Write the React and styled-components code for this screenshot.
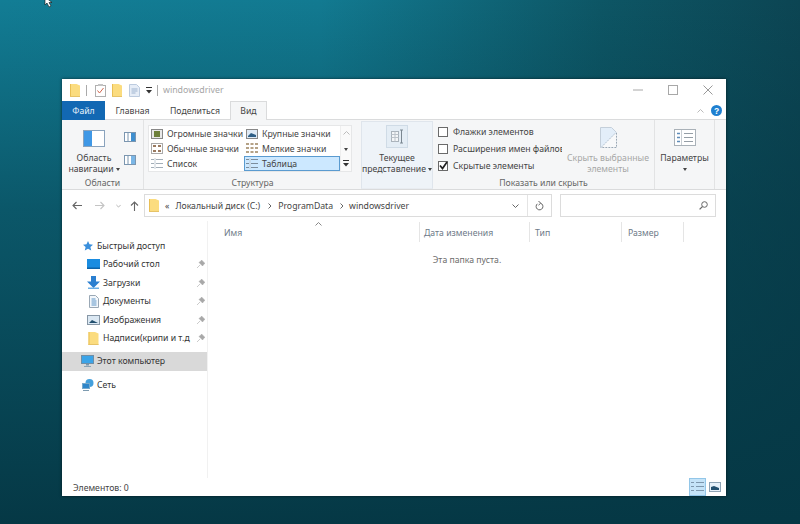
import React from "react";
import styled, { createGlobalStyle } from "styled-components";

const GlobalStyle = createGlobalStyle`
  html, body { margin: 0; padding: 0; }
  body { font-family: "Noto Sans", "Open Sans", sans-serif; font-size: 8.7px; color: #444; }
  * { box-sizing: border-box; }
  svg { flex: none; }
`;

const Desktop = styled.div`
  position: relative;
  width: 800px;
  height: 524px;
  overflow: hidden;
  padding: 79px 74px 28px 62px;
  background:
    linear-gradient(180deg, rgba(5, 56, 69, 0) 0%, rgba(5, 56, 69, 0.55) 40%, #053845 100%),
    linear-gradient(90deg, #127d95 0%, #127a91 40%, #0d5665 75%, #0c4553 100%);
`;

const Cursor = styled.svg`
  position: absolute;
  left: 44px;
  top: -3px;
`;

const Window = styled.div`
  width: 664px;
  height: 417px;
  display: flex;
  flex-direction: column;
  background: #fff;
  box-shadow: 0 0 3px rgba(0, 0, 0, 0.6);
`;

const TitleBar = styled.div`
  height: 22px;
  flex: none;
  display: flex;
  align-items: center;
  padding-left: 8px;
`;

const QuickIcon = styled.span`
  display: flex;
  margin-left: ${(p) => p.$gap || 0}px;
`;

const TitleDivider = styled.span`
  width: 1px;
  height: 11px;
  margin-left: ${(p) => p.$gap}px;
  background: #aaa;
`;

const TitleText = styled.span`
  margin-left: 5px;
  color: #a5a5a5;
  font-size: 8.8px;
`;

const WindowControls = styled.div`
  margin-left: auto;
  padding-right: 13px;
  display: flex;
  align-items: center;
  gap: 25px;
`;

const TabBar = styled.div`
  height: 19px;
  flex: none;
  display: flex;
  align-items: stretch;
  position: relative;
`;

const FileTab = styled.div`
  width: 43px;
  display: flex;
  align-items: center;
  justify-content: center;
  background: #1268b3;
  color: #e6f1fa;
`;

const Tab = styled.div`
  width: ${(p) => p.$w}px;
  display: flex;
  align-items: center;
  justify-content: center;
  color: #444;
  z-index: 1;
  ${(p) =>
    p.$active &&
    `
    background: #f5f6f7;
    border: 1px solid #dadbdc;
    border-bottom: none;
  `}
`;

const TabTools = styled.div`
  margin-left: auto;
  padding-right: 4px;
  display: flex;
  align-items: center;
  gap: 7px;
`;

const Ribbon = styled.div`
  height: 71px;
  flex: none;
  display: flex;
  background: #f5f6f7;
  border-top: 1px solid #dadbdc;
  border-bottom: 1px solid #dadbdc;
  margin-top: -1px;
`;

const Group = styled.div`
  width: ${(p) => p.$w}px;
  flex: none;
  display: flex;
  flex-direction: column;
  border-right: ${(p) => (p.$plain ? "none" : "1px solid #e2e3e4")};
`;

const GroupBody = styled.div`
  flex: 1;
  display: flex;
  min-height: 0;
`;

const GroupLabel = styled.div`
  height: 12px;
  flex: none;
  text-align: center;
  line-height: 12px;
  color: #666;
  white-space: nowrap;
`;

const BigButton = styled.div`
  width: ${(p) => p.$w}px;
  margin-left: ${(p) => p.$ml || 0}px;
  display: flex;
  flex-direction: column;
  align-items: center;
  text-align: center;
  line-height: 10.5px;
  white-space: nowrap;
  padding-top: ${(p) => p.$pt || 9}px;
  color: ${(p) => (p.$disabled ? "#a6a6a6" : "#444")};
`;

const BigIcon = styled.div`
  height: ${(p) => p.$h || 22}px;
  flex: none;
  display: flex;
  align-items: flex-start;
  justify-content: center;
`;

const Caret = styled.span`
  display: inline-block;
  width: 0;
  height: 0;
  margin-left: 2px;
  vertical-align: 1px;
  border-left: 2px solid transparent;
  border-right: 2px solid transparent;
  border-top: 3px solid #444;
`;

const LoneCaret = styled(Caret)`
  margin: 4px 0 0;
`;

const SmallPaneIcons = styled.div`
  margin-left: 5px;
  padding-top: 12px;
  display: flex;
  flex-direction: column;
  gap: 13px;
`;

const Gallery = styled.div`
  margin: 5px 0 0 4px;
  width: 204px;
  height: 47px;
  display: flex;
  background: #fff;
  border: 1px solid #e6e7e8;
`;

const GalleryGrid = styled.div`
  width: 191px;
  display: grid;
  grid-template-columns: 95px 96px;
  grid-auto-rows: 15px;
`;

const GalleryItem = styled.div`
  display: flex;
  align-items: center;
  gap: 4px;
  padding-left: ${(p) => (p.$selected ? 1 : 2)}px;
  white-space: nowrap;
  ${(p) =>
    p.$selected &&
    `
    background: #cce8ff;
    border: 1px solid #5a9bd0;
  `}
`;

const GalleryScroll = styled.div`
  flex: 1;
  display: flex;
  flex-direction: column;
  align-items: center;
  justify-content: space-around;
  background: #fafafa;
  border-left: 1px solid #eee;
`;

const CurrentView = styled.div`
  width: 72px;
  margin-top: 1px;
  display: flex;
  flex-direction: column;
  align-items: center;
  text-align: center;
  line-height: 10.5px;
  white-space: nowrap;
  padding-top: 3px;
  background: #eef3f8;
  border: 1px solid #dfe5ec;
  border-bottom-color: #e8ecf1;
`;

const CheckList = styled.div`
  width: 124px;
  margin-left: 5px;
  padding-top: 5px;
  display: flex;
  flex-direction: column;
  gap: 4px;
  overflow: hidden;
`;

const CheckRow = styled.div`
  height: 13px;
  display: flex;
  align-items: center;
  gap: 5px;
  white-space: nowrap;
`;

const CheckBox = styled.span`
  width: 10px;
  height: 10px;
  flex: none;
  display: flex;
  align-items: center;
  justify-content: center;
  background: #fff;
  border: 1px solid #6a6a6a;
`;

const AddressRow = styled.div`
  height: 31px;
  flex: none;
  display: flex;
  align-items: center;
  padding-left: 10px;
`;

const NavButtons = styled.div`
  width: 72px;
  flex: none;
  display: flex;
  align-items: center;
`;

const NavButton = styled.span`
  display: flex;
  margin-left: ${(p) => p.$ml || 0}px;
`;

const AddressBox = styled.div`
  width: 408px;
  height: 23px;
  flex: none;
  display: flex;
  align-items: center;
  padding-left: 4px;
  border: 1px solid #dcdcdc;
  color: #444;
`;

const Crumb = styled.span`
  margin-left: ${(p) => p.$ml}px;
  white-space: nowrap;
`;

const AddressEnd = styled.div`
  margin-left: auto;
  display: flex;
  align-items: center;
  height: 100%;
`;

const AddressCell = styled.span`
  width: ${(p) => p.$w}px;
  height: 100%;
  display: flex;
  align-items: center;
  justify-content: center;
  border-left: ${(p) => (p.$line ? "1px solid #e4e4e4" : "none")};
`;

const SearchBox = styled.div`
  width: 156px;
  height: 23px;
  margin-left: 8px;
  display: flex;
  align-items: center;
  justify-content: flex-end;
  padding-right: 7px;
  border: 1px solid #dcdcdc;
`;

const Body = styled.div`
  flex: 1;
  min-height: 0;
  display: flex;
`;

const NavPane = styled.div`
  width: 146px;
  flex: none;
  padding-top: 15.5px;
  border-right: 1px solid #f1f1f1;
`;

const NavRow = styled.div`
  height: 18.5px;
  margin-top: ${(p) => p.$mt || 0}px;
  display: flex;
  align-items: center;
  gap: 3px;
  padding-left: ${(p) => (p.$item ? 25 : 19)}px;
  color: #333;
  white-space: nowrap;
  background: ${(p) => (p.$selected ? "#d9d9d9" : "transparent")};
`;

const NavIcon = styled.span`
  width: 13px;
  flex: none;
  display: flex;
  justify-content: center;
`;

const NavPin = styled.span`
  margin-left: auto;
  padding-right: 2px;
  display: flex;
`;

const Files = styled.div`
  flex: 1;
  min-width: 0;
  display: flex;
  flex-direction: column;
  align-items: stretch;
`;

const ColumnHeader = styled.div`
  height: 20px;
  margin-top: 1px;
  flex: none;
  display: flex;
`;

const Column = styled.div`
  position: relative;
  width: ${(p) => p.$w}px;
  flex: none;
  padding-left: ${(p) => p.$pl}px;
  padding-top: 5px;
  line-height: 12px;
  color: #6d7a88;
  border-right: 1px solid #e5e5e5;
`;

const SortArrow = styled.svg`
  position: absolute;
  right: 97px;
  top: 0;
`;

const EmptyNote = styled.div`
  margin-top: 12px;
  text-align: center;
  color: #6d6d6d;
`;

const StatusBar = styled.div`
  height: 18px;
  flex: none;
  display: flex;
  align-items: center;
  padding-left: 11px;
  color: #444;
`;

const StatusText = styled.span`
  margin-top: 2px;
`;

const ViewSwitch = styled.div`
  margin-left: auto;
  height: 100%;
  padding-right: 5px;
  display: flex;
  align-items: center;
  gap: 3px;
`;

const ViewButton = styled.span`
  width: 17px;
  height: 18px;
  display: flex;
  align-items: center;
  justify-content: center;
  background: ${(p) => (p.$active ? "#c4e3f8" : "transparent")};
  border: 1px solid ${(p) => (p.$active ? "#92c6e8" : "transparent")};
`;

const Folder = ({ w = 10, h = 13 }) => (
  <svg width={w} height={h} viewBox="0 0 10 13">
    <path d="M0 0h6.500l3.500 1.500V13H0z" fill="#fbdc7f" />
    <path d="M0 0h1v13H0z" fill="#e9bf55" />
    <path d="M0 12h10v1H0z" fill="#e6c368" />
  </svg>
);

const CheckDoc = () => (
  <svg width="11" height="13" viewBox="0 0 11 13">
    <rect x=".5" y="1.500" width="10" height="11" fill="#fff" stroke="#b0b0b0" />
    <rect x="3" y="0" width="5" height="2" fill="#c4c4c4" />
    <path d="M2.500 6.500l2 2.500 4-5" fill="none" stroke="#d0664f" />
  </svg>
);

const NoteDoc = () => (
  <svg width="11" height="13" viewBox="0 0 11 13">
    <path d="M.5.5h7l3 3v9H.5z" fill="#e6edf7" stroke="#bccbdf" />
    <path d="M2.500 5h6M2.500 7h6M2.500 9h4" stroke="#9db3cf" />
  </svg>
);

const QuickMenu = () => (
  <svg width="6" height="7" viewBox="0 0 6 7">
    <path d="M0 0h6v1H0z" fill="#333" />
    <path d="M0 3h6L3 6.500z" fill="#333" />
  </svg>
);

const Minimize = () => (
  <svg width="10" height="10" viewBox="0 0 10 10">
    <path d="M0 5h10" stroke="#a8a8a8" />
  </svg>
);

const Maximize = () => (
  <svg width="10" height="10" viewBox="0 0 10 10">
    <rect x=".5" y=".5" width="9" height="9" fill="none" stroke="#a8a8a8" />
  </svg>
);

const CloseX = () => (
  <svg width="10" height="10" viewBox="0 0 10 10">
    <path d="M.5.5l9 9M9.500.5l-9 9" stroke="#999" />
  </svg>
);

const ChevronUp = ({ color = "#999" }) => (
  <svg width="7" height="4" viewBox="0 0 7 4">
    <path d="M.5 3.500l3-3 3 3" fill="none" stroke={color} />
  </svg>
);

const ChevronDown = ({ color = "#666", w = 7 }) => (
  <svg width={w} height="4" viewBox="0 0 7 4">
    <path d="M.5.5l3 3 3-3" fill="none" stroke={color} />
  </svg>
);

const Help = () => (
  <svg width="11" height="11" viewBox="0 0 11 11">
    <circle cx="5.500" cy="5.500" r="5.500" fill="#1e7fd0" />
    <text x="5.500" y="8.600" textAnchor="middle" fontSize="8.500" fontWeight="700" fill="#fff" fontFamily="Liberation Sans, sans-serif">?</text>
  </svg>
);

const NavPaneIcon = () => (
  <svg width="22" height="17" viewBox="0 0 22 17">
    <rect x=".5" y=".5" width="21" height="16" fill="#fff" stroke="#8aa3bd" />
    <rect x="1" y="1" width="8" height="15" fill="#3f98e6" />
  </svg>
);

const PreviewPane = ({ details }) => (
  <svg width="12" height="10" viewBox="0 0 12 10">
    <rect x=".5" y=".5" width="11" height="9" fill="#fff" stroke="#7b96b0" />
    <rect x="7" y="1" width="4" height="8" fill={details ? "#7ab6e6" : "#3f8fcf"} />
    <path d="M4 1v8" stroke="#7b96b0" />
  </svg>
);

const ViewIcon = ({ kind }) => {
  if (kind === "huge")
    return (
      <svg width="12" height="10" viewBox="0 0 12 10">
        <rect x=".5" y=".5" width="11" height="9" fill="#e8e8e8" stroke="#888" />
        <rect x="3" y="2" width="6" height="6" fill="#6d7f3a" />
      </svg>
    );
  if (kind === "large")
    return (
      <svg width="12" height="10" viewBox="0 0 12 10">
        <rect x=".5" y=".5" width="11" height="9" fill="#dfeaf5" stroke="#888" />
        <path d="M2 7l3-3 5 2v2H2z" fill="#2f5f86" />
      </svg>
    );
  if (kind === "normal")
    return (
      <svg width="12" height="11" viewBox="0 0 12 11">
        <rect x=".5" y=".5" width="11" height="10" fill="#fff" stroke="#aaa" />
        <path d="M2 3h3M7 3h3M2 8h3M7 8h3" stroke="#9a7a60" strokeWidth="2" />
      </svg>
    );
  if (kind === "small")
    return (
      <svg width="12" height="11" viewBox="0 0 12 11">
        {[1, 5, 9].map((y) => (
          <path key={y} d={`M0 ${y}h3M4.500 ${y}h3M9 ${y}h3`} stroke="#b5a286" strokeWidth="2" />
        ))}
      </svg>
    );
  const tone = kind === "list" ? "#a3aeb8" : "#7c8d9c";
  return (
    <svg width="12" height="11" viewBox="0 0 12 11">
      {[1.5, 5.5, 9.5].map((y) => (
        <path key={y} d={`M0 ${y}h3M5 ${y}h7`} stroke={tone} fill="none" />
      ))}
      <path d="M4 0v11" stroke="#c5ced6" />
    </svg>
  );
};

const CurrentViewIcon = () => (
  <svg width="22" height="23" viewBox="0 0 22 23">
    <rect x=".5" y=".5" width="21" height="22" fill="#e4edf5" stroke="#cfdbe6" />
    <rect x="5.500" y="6.500" width="7" height="10" fill="#f4f6f8" stroke="#aab3bb" />
    <path d="M5.500 9.500h7M5.500 12.500h7M9 6.500v10" stroke="#bcc3ca" />
    <path d="M15.500 5v13M14 5h3M14 18h3" stroke="#7b8791" fill="none" />
  </svg>
);

const Tick = () => (
  <svg width="9" height="9" viewBox="0 0 9 9">
    <path d="M1 4.500l2.500 3L8 1" fill="none" stroke="#222" strokeWidth="1.7" />
  </svg>
);

const HideIcon = () => (
  <svg width="17" height="21" viewBox="0 0 17 21">
    <path d="M.5.5h11l5 5v15H.5z" fill="#e3eef9" stroke="#c4cfda" />
    <path d="M16.500 5.500v15H1z" fill="#f8f9fa" />
    <path d="M1 20.500L16 5.500" stroke="#b5c2cf" strokeDasharray="2 1" />
    <path d="M16.500 6v14.500H1" fill="none" stroke="#9aa7b3" strokeDasharray="1.500 1.500" />
  </svg>
);

const OptionsIcon = () => (
  <svg width="22" height="17" viewBox="0 0 22 17">
    <rect x=".5" y=".5" width="21" height="16" fill="#fff" stroke="#a9b1b8" />
    <path d="M7.500 1v15" stroke="#c9ced3" />
    <path d="M3 4.500h3M3 8.500h3M3 12.500h3" stroke="#5f8cb8" strokeWidth="1.6" />
    <path d="M10 4.500h9M10 8.500h9M10 12.500h9" stroke="#959ea6" />
  </svg>
);

const BackArrow = ({ color }) => (
  <svg width="10" height="9" viewBox="0 0 10 9">
    <path d="M10 4.500H1M4.500 1L1 4.500 4.500 8" fill="none" stroke={color} strokeWidth="1.1" />
  </svg>
);

const ForwardArrow = ({ color }) => (
  <svg width="10" height="9" viewBox="0 0 10 9">
    <path d="M0 4.500h9M5.500 1L9 4.500 5.500 8" fill="none" stroke={color} strokeWidth="1.1" />
  </svg>
);

const UpArrow = () => (
  <svg width="9" height="10" viewBox="0 0 9 10">
    <path d="M4.500 10V1M1 4.500L4.500 1 8 4.500" fill="none" stroke="#666" strokeWidth="1.1" />
  </svg>
);

const CrumbArrow = () => (
  <svg width="3" height="6" viewBox="0 0 3 6">
    <path d="M.5.5L3 3 .5 5.500" fill="none" stroke="#666" />
  </svg>
);

const Refresh = () => (
  <svg width="9" height="10" viewBox="0 0 9 10">
    <path d="M5.500 2.200A3.400 3.400 0 1 1 2.400 2.800" fill="none" stroke="#666" />
    <path d="M3.500 0l2.200 2.200-2.200 2" fill="none" stroke="#666" />
  </svg>
);

const Search = () => (
  <svg width="9" height="9" viewBox="0 0 9 9">
    <circle cx="5.500" cy="3.500" r="2.800" fill="none" stroke="#666" />
    <path d="M3.400 5.600L.6 8.400" stroke="#666" strokeWidth="1.3" />
  </svg>
);

const Star = () => (
  <svg width="10" height="10" viewBox="0 0 10 10">
    <path d="M5 0l1.500 3.300 3.500.4-2.600 2.300.8 3.500L5 7.700 1.800 9.500l.8-3.500L0 3.700l3.500-.4z" fill="#3a8fdc" />
  </svg>
);

const Pin = () => (
  <svg width="8" height="8" viewBox="0 0 8 8">
    <path d="M4.500 0L8 3.500 6.800 4 5.600 6 2 2.400 4 1.200zM3 5L0 8" fill="#a8a8a8" stroke="#a8a8a8" strokeWidth=".6" />
  </svg>
);

const DesktopIcon = () => (
  <svg width="13" height="10" viewBox="0 0 13 10">
    <rect width="13" height="10" fill="#1a8ce0" />
    <path d="M0 8.500h13V10H0z" fill="#0d63a8" />
  </svg>
);

const Downloads = () => (
  <svg width="13" height="13" viewBox="0 0 13 13">
    <path d="M4 0h5v5.500h4L6.500 12 0 5.500h4z" fill="#2b7fd0" />
    <path d="M1 11.500h11V13H1z" fill="#6aaee6" />
  </svg>
);

const Documents = () => (
  <svg width="10" height="13" viewBox="0 0 10 13">
    <path d="M.5.5h6l3 3v9H.5z" fill="#f3f7fb" stroke="#9aa8b5" />
    <path d="M2.500 4h4M2.500 6h5M2.500 8h5M2.500 10h5" stroke="#5d94c6" />
  </svg>
);

const Images = () => (
  <svg width="13" height="10" viewBox="0 0 13 10">
    <rect x=".5" y=".5" width="12" height="9" fill="#dbe8f3" stroke="#8797a6" />
    <path d="M2 8l3-3 3 1.500 3 1.500z" fill="#23506f" />
  </svg>
);

const Computer = () => (
  <svg width="13" height="12" viewBox="0 0 13 12">
    <rect x=".5" y=".5" width="12" height="8" fill="#3ba4e8" stroke="#6f8ea6" />
    <path d="M5 9h3v1.500H5z" fill="#7b97ab" />
    <path d="M3 11h7v1H3z" fill="#8aa3b5" />
  </svg>
);

const Network = () => (
  <svg width="12" height="12" viewBox="0 0 12 12">
    <circle cx="7.500" cy="4" r="4" fill="#45a0dc" />
    <rect x=".5" y="4.500" width="7" height="5" fill="#2f86c9" stroke="#76a9cc" />
    <path d="M1 11h6v1H1z" fill="#7d9bb0" />
  </svg>
);

const DetailsViewIcon = () => (
  <svg width="13" height="12" viewBox="0 0 13 12">
    {[1.5, 5.5, 9.5].map((y) => (
      <path key={y} d={`M0 ${y}h3M5 ${y}h8`} stroke="#7d97ad" />
    ))}
  </svg>
);

const ThumbViewIcon = () => (
  <svg width="12" height="10" viewBox="0 0 12 10">
    <rect x=".5" y=".5" width="11" height="9" fill="#e7f1fa" stroke="#8ea3b5" />
    <path d="M2 8V5l3-1 5 2v2z" fill="#23506f" />
  </svg>
);

const pinned = [
  { label: "Рабочий стол", icon: <DesktopIcon /> },
  { label: "Загрузки", icon: <Downloads /> },
  { label: "Документы", icon: <Documents /> },
  { label: "Изображения", icon: <Images /> },
  { label: "Надписи(крипи и т.д", icon: <Folder w={11} h={13} /> },
];

const layouts = [
  { label: "Огромные значки", kind: "huge" },
  { label: "Крупные значки", kind: "large" },
  { label: "Обычные значки", kind: "normal" },
  { label: "Мелкие значки", kind: "small" },
  { label: "Список", kind: "list" },
  { label: "Таблица", kind: "table", selected: true },
];

const toggles = [
  { label: "Флажки элементов" },
  { label: "Расширения имен файлов" },
  { label: "Скрытые элементы", checked: true },
];

export default function App() {
  return (
    <Desktop>
      <GlobalStyle />
      <Cursor width="9" height="11" viewBox="0 0 9 11">
        <path d="M1 0v8l2-2 2 4 2-1-2-3.500h3z" fill="#fff" stroke="#111" strokeWidth=".6" />
      </Cursor>
      <Window>
        <TitleBar>
          <QuickIcon><Folder /></QuickIcon>
          <TitleDivider $gap={6} />
          <QuickIcon $gap={8}><CheckDoc /></QuickIcon>
          <QuickIcon $gap={6}><Folder /></QuickIcon>
          <QuickIcon $gap={7}><NoteDoc /></QuickIcon>
          <QuickIcon $gap={6}><QuickMenu /></QuickIcon>
          <TitleDivider $gap={5} />
          <TitleText>windowsdriver</TitleText>
          <WindowControls>
            <Minimize />
            <Maximize />
            <CloseX />
          </WindowControls>
        </TitleBar>
        <TabBar>
          <FileTab>Файл</FileTab>
          <Tab $w={55}>Главная</Tab>
          <Tab $w={70}>Поделиться</Tab>
          <Tab $w={37} $active>Вид</Tab>
          <TabTools>
            <ChevronUp color="#bbb" />
            <Help />
          </TabTools>
        </TabBar>
        <Ribbon>
          <Group $w={82}>
            <GroupBody>
              <BigButton $w={50} $ml={7} $pt={10}>
                <BigIcon $h={23}><NavPaneIcon /></BigIcon>
                Область
                <span>навигации<Caret /></span>
              </BigButton>
              <SmallPaneIcons>
                <PreviewPane />
                <PreviewPane details />
              </SmallPaneIcons>
            </GroupBody>
            <GroupLabel>Области</GroupLabel>
          </Group>
          <Group $w={217} $plain>
            <GroupBody>
              <Gallery>
                <GalleryGrid>
                  {layouts.map((item) => (
                    <GalleryItem key={item.label} $selected={item.selected}>
                      <ViewIcon kind={item.kind} />
                      {item.label}
                    </GalleryItem>
                  ))}
                </GalleryGrid>
                <GalleryScroll>
                  <ChevronUp color="#bbb" />
                  <LoneCaret />
                  <QuickMenu />
                </GalleryScroll>
              </Gallery>
            </GroupBody>
            <GroupLabel>Структура</GroupLabel>
          </Group>
          <CurrentView>
            <BigIcon $h={28}><CurrentViewIcon /></BigIcon>
            Текущее
            <span>представление<Caret /></span>
          </CurrentView>
          <Group $w={222}>
            <GroupBody>
              <CheckList>
                {toggles.map((item) => (
                  <CheckRow key={item.label}>
                    <CheckBox>{item.checked && <Tick />}</CheckBox>
                    {item.label}
                  </CheckRow>
                ))}
              </CheckList>
              <BigButton $w={84} $ml={4} $disabled $pt={7}>
                <BigIcon $h={26}><HideIcon /></BigIcon>
                Скрыть выбранные
                <span>элементы</span>
              </BigButton>
            </GroupBody>
            <GroupLabel>Показать или скрыть</GroupLabel>
          </Group>
          <Group $w={60}>
            <BigButton $w={59} $pt={9}>
              <BigIcon $h={24}><OptionsIcon /></BigIcon>
              Параметры
              <LoneCaret />
            </BigButton>
          </Group>
        </Ribbon>
        <AddressRow>
          <NavButtons>
            <NavButton><BackArrow color="#666" /></NavButton>
            <NavButton $ml={13}><ForwardArrow color="#c4c4c4" /></NavButton>
            <NavButton $ml={10.5}><ChevronDown color="#999" w={5} /></NavButton>
            <NavButton $ml={9.5}><UpArrow /></NavButton>
          </NavButtons>
          <AddressBox>
            <Folder />
            <Crumb $ml={6}>«</Crumb>
            <Crumb $ml={6}>Локальный диск (C:)</Crumb>
            <Crumb $ml={8}><CrumbArrow /></Crumb>
            <Crumb $ml={7}>ProgramData</Crumb>
            <Crumb $ml={7}><CrumbArrow /></Crumb>
            <Crumb $ml={6}>windowsdriver</Crumb>
            <AddressEnd>
              <AddressCell $w={24}><ChevronDown /></AddressCell>
              <AddressCell $w={24} $line><Refresh /></AddressCell>
            </AddressEnd>
          </AddressBox>
          <SearchBox><Search /></SearchBox>
        </AddressRow>
        <Body>
          <NavPane>
            <NavRow>
              <NavIcon><Star /></NavIcon>
              Быстрый доступ
            </NavRow>
            {pinned.map((item) => (
              <NavRow key={item.label} $item>
                <NavIcon>{item.icon}</NavIcon>
                {item.label}
                <NavPin><Pin /></NavPin>
              </NavRow>
            ))}
            <NavRow $selected $mt={4.5}>
              <NavIcon><Computer /></NavIcon>
              Этот компьютер
            </NavRow>
            <NavRow $mt={5}>
              <NavIcon><Network /></NavIcon>
              Сеть
            </NavRow>
          </NavPane>
          <Files>
            <ColumnHeader>
              <Column $w={212} $pl={16}>
                Имя
                <SortArrow width="7" height="4" viewBox="0 0 7 4">
                  <path d="M.5 3.500l3-3 3 3" fill="none" stroke="#888" />
                </SortArrow>
              </Column>
              <Column $w={110} $pl={4}>Дата изменения</Column>
              <Column $w={92} $pl={5}>Тип</Column>
              <Column $w={62} $pl={6}>Размер</Column>
            </ColumnHeader>
            <EmptyNote>Эта папка пуста.</EmptyNote>
          </Files>
        </Body>
        <StatusBar>
          <StatusText>Элементов: 0</StatusText>
          <ViewSwitch>
            <ViewButton $active><DetailsViewIcon /></ViewButton>
            <ThumbViewIcon />
          </ViewSwitch>
        </StatusBar>
      </Window>
    </Desktop>
  );
}
